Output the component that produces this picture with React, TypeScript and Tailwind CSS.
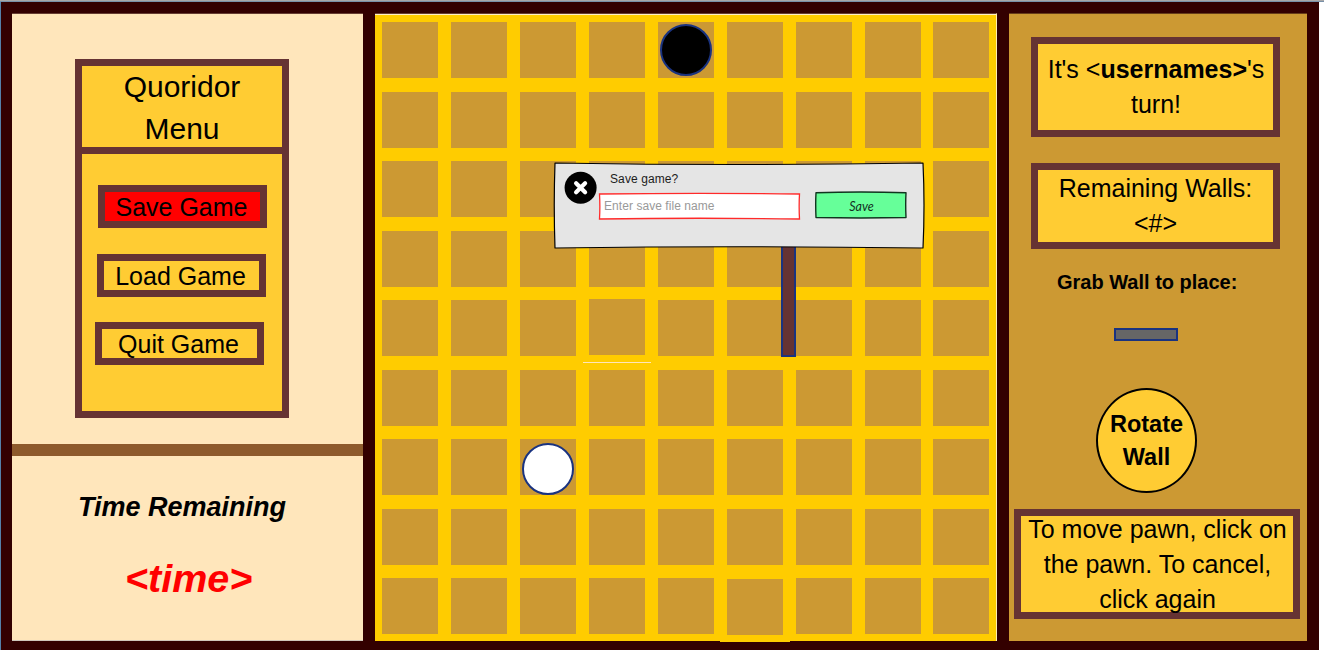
import React from "react";

const cells = Array.from({ length: 81 }, (_, i) => i);

// Two tiles sit one pixel off the regular grid.
const nudges: Record<number, string> = { 39: "-mt-px", 77: "mt-px" };

function Cell({ index }: { index: number }) {
  return <div className={`h-[56px] w-[56px] bg-[#cc9933] ${nudges[index] ?? ""}`} />;
}

function MenuButton({ label, className }: { label: string; className: string }) {
  return (
    <button
      className={`flex h-[43px] w-[169px] shrink-0 items-center justify-center whitespace-nowrap border-[7px] border-[#663333] pr-[2px] pt-[2px] text-[25px] leading-[29px] ${className}`}
    >
      {label}
    </button>
  );
}

function LeftPanel() {
  return (
    <aside className="flex h-[628px] w-[351px] shrink-0 flex-col border-b border-t border-b-[#cfc6ba] border-t-[#663d33] bg-[#ffe6bb]">
      <section className="ml-[63px] mt-[45px] flex h-[359px] w-[214px] shrink-0 flex-col border-[7px] border-[#663333] bg-[#ffcc33]">
        <h1 className="h-[88px] shrink-0 border-b-[7px] border-[#663333] text-center text-[30px] font-normal leading-[42px]">
          Quoridor
          <br />
          Menu
        </h1>
        <nav className="flex flex-col pt-[31px]">
          <MenuButton label="Save Game" className="ml-[16px] bg-[#ff0000]" />
          <MenuButton label="Load Game" className="ml-[15px] mt-[26px]" />
          <MenuButton label="Quit Game" className="ml-[13px] mt-[25px]" />
        </nav>
      </section>
      <div className="mt-[26px] h-[12px] shrink-0 bg-[#8e5a2c]" />
      <section className="flex flex-col font-bold italic">
        <h2 className="ml-[66px] mt-[32px] text-[27px] leading-[38px]">Time Remaining</h2>
        <p className="ml-[113px] mt-[24px] text-[39.5px] leading-[56px] text-[#ff0000]">&lt;time&gt;</p>
      </section>
    </aside>
  );
}

function Board() {
  return (
    <main className="relative h-[628px] w-[622px] shrink-0 border-r border-t border-r-[#ffeeb0] border-t-[#663d33] bg-[#ffcc00]">
      <div className="h-px bg-[#fff0c4]" />
      <div className="grid grid-cols-[69px_69px_69px_69px_69px_69px_69px_68px_56px] grid-rows-[70px_69px_70px_69px_70px_69px_70px_69px_56px] pl-[7px] pt-[7px]">
        {cells.map((i) => (
          <Cell key={i} index={i} />
        ))}
      </div>
      <div className="absolute left-[345px] top-[627px] h-px w-[70px] bg-[#ffcc00]" />
      <div className="absolute left-[208px] top-[348px] h-px w-[68px] bg-[#ffe6bb]" />
      <div className="absolute left-[285px] top-[10px] h-[52px] w-[52px] rounded-full border-2 border-[#1a3380] bg-black" />
      <div className="absolute left-[147px] top-[429px] h-[52px] w-[52px] rounded-full border-2 border-[#1a3380] bg-white" />
      <div className="absolute left-[406px] top-[223px] h-[120px] w-[15px] border-2 border-[#1a3380] bg-[#663333]" />
      <SaveDialog />
    </main>
  );
}

function SaveDialog() {
  return (
    <div className="absolute left-[178px] top-[147px] h-[88px] w-[372px]">
      <svg className="absolute inset-0" width="372" height="88" viewBox="0 0 372 88" fill="none">
        <path
          d="M2 2 Q186 5 370 2 Q372 44 370 87 Q186 84.5 2 87 Q0.5 44 2 2Z"
          fill="#e5e5e5"
          stroke="#000"
          strokeWidth="1.2"
          strokeLinejoin="round"
        />
      </svg>
      <div className="relative flex h-full">
        <button className="ml-[11px] mt-[10px] h-[33px] w-[33px] shrink-0" aria-label="Close">
          <svg width="33" height="33" viewBox="0 0 33 33">
            <circle cx="16.6" cy="16.8" r="16" fill="#000" />
            <path d="M12.1 12.2 L21.1 21.2 M21.1 12.2 L12.1 21.2" stroke="#fff" strokeWidth="4.2" strokeLinecap="round" />
          </svg>
        </button>
        <div className="ml-px flex flex-col">
          <p className="ml-[12px] mt-[10px] text-[12px] leading-[16px] tracking-[0.1px] text-[#1c1c1c]">Save game?</p>
          <div className="relative mt-[5px] flex h-[28px] w-[203px] items-center">
            <svg className="absolute inset-0" width="203" height="28" viewBox="0 0 203 28">
              <path
                d="M1.5 2 Q101 .6 201.5 2 Q200.8 14 201.5 27 Q101 25.5 1.5 27 Q2.2 14 1.5 2Z"
                fill="#fff"
                stroke="#ff2a2a"
                strokeWidth="1.3"
              />
            </svg>
            <span className="relative ml-[6px] whitespace-nowrap text-[12px] leading-[16px] tracking-[0.06px] text-[#999999]">
              Enter save file name
            </span>
          </div>
        </div>
        <button className="relative ml-[13px] mt-[29px] flex h-[29px] w-[94px] items-center justify-center">
          <svg className="absolute inset-0" width="94" height="29" viewBox="0 0 94 29">
            <path
              d="M2 2.8 Q47 1.3 92 2.8 Q91.4 14 92 27.5 Q47 28.4 2 27.5 Q1.4 14 2 2.8Z"
              fill="#66ff99"
              stroke="#10351f"
              strokeWidth="1.4"
              strokeLinejoin="round"
            />
          </svg>
          <span className="relative pl-px pt-[4px] font-[Lato,sans-serif] text-[12.5px] italic leading-[16px] text-[#12301f]">
            Save
          </span>
        </button>
      </div>
    </div>
  );
}

function RightPanel() {
  const box =
    "flex shrink-0 items-center justify-center border-[7px] border-[#663333] bg-[#ffcc33] text-center text-[25px] leading-[35px]";
  return (
    <aside className="flex h-[628px] w-[298px] shrink-0 flex-col border-t border-[#663d1a] bg-[#cc9933]">
      <div className={`${box} ml-[22px] mt-[23px] h-[100px] w-[249px]`}>
        <p className="whitespace-nowrap pl-px">
          It's &lt;<b>usernames&gt;</b>'s
          <br />
          turn!
        </p>
      </div>
      <div className={`${box} ml-[22px] mt-[26px] h-[86px] w-[249px]`}>
        <p>
          Remaining Walls:
          <br />
          &lt;#&gt;
        </p>
      </div>
      <p className="ml-[48px] mt-[19px] text-[20px] font-bold leading-[28px]">Grab Wall to place:</p>
      <div className="ml-[105px] mt-[32px] h-[13px] w-[64px] shrink-0 border-2 border-[#1a3380] bg-[#666666]" />
      <button className="ml-[87px] mt-[47px] flex h-[105px] w-[101px] shrink-0 items-center justify-center rounded-[50%] border-2 border-black bg-[#ffcc33] text-[23.5px] font-bold leading-[33px]">
        <span>
          Rotate
          <br />
          Wall
        </span>
      </button>
      <div className={`${box} ml-[5px] mt-[16px] h-[110px] w-[286px]`}>
        <p className="whitespace-nowrap pl-px">
          To move pawn, click on
          <br />
          the pawn. To cancel,
          <br />
          click again
        </p>
      </div>
    </aside>
  );
}

export default function App() {
  return (
    <div className="flex h-[650px] w-[1324px] flex-col overflow-hidden bg-white font-['Liberation_Sans',Arial,sans-serif] text-black">
      <div className="h-px shrink-0 bg-[#a8a8a8]" />
      <div className="h-px shrink-0 bg-[#7890a8]" />
      <div className="flex h-[648px] w-[1319px] shrink-0 gap-[12px] border-l border-[#5580a8] bg-[#330000] pl-[11px] pt-[11px]">
        <LeftPanel />
        <Board />
        <RightPanel />
      </div>
    </div>
  );
}
